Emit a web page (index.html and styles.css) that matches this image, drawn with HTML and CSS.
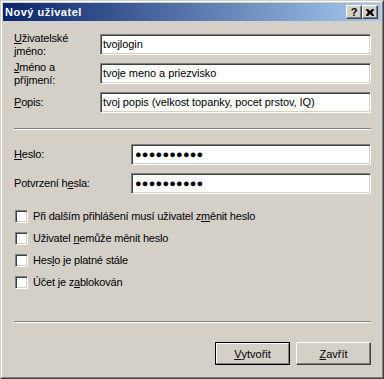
FILE: index.html
```html
<!DOCTYPE html>
<html lang="cs">
<head>
<meta charset="utf-8">
<title>Nový uživatel</title>
<link rel="stylesheet" href="styles.css">
</head>
<body>
<div class="window">
  <div class="frame">
    <div class="titlebar">
      <span class="title">Nový uživatel</span>
      <div class="tb-buttons">
        <span class="tb-btn help">?</span>
        <span class="tb-btn close"><svg width="8" height="7" viewBox="0 0 8 7"><path d="M0 0h2l2 2 2-2h2v1l-2 2.5 2 2.5v1h-2l-2-2-2 2h-2v-1l2-2.5-2-2.5z" fill="#000"/></svg></span>
      </div>
    </div>
    <div class="content">
      <div class="row">
        <label class="lbl lbl-wide"><u>U</u>živatelské<br>jméno:</label>
        <div class="field">tvojlogin</div>
      </div>
      <div class="row">
        <label class="lbl lbl-wide"><u>J</u>méno a<br>příjmení:</label>
        <div class="field">tvoje meno a priezvisko</div>
      </div>
      <div class="row">
        <label class="lbl lbl-wide"><u>P</u>opis:</label>
        <div class="field">tvoj popis (velkost topanky, pocet prstov, IQ)</div>
      </div>
      <div class="sep sep-first"></div>
      <div class="row pw-first">
        <label class="lbl lbl-pw"><u>H</u>eslo:</label>
        <div class="field pw">●●●●●●●●●●</div>
      </div>
      <div class="row">
        <label class="lbl lbl-pw">Potvrzení h<u>e</u>sla:</label>
        <div class="field pw">●●●●●●●●●●</div>
      </div>
      <div class="checks">
        <div class="check"><span class="box"></span><span class="ctext">Při dalším přihlášení musí uživatel z<u>m</u>ěnit heslo</span></div>
        <div class="check"><span class="box"></span><span class="ctext">Uživatel <u>n</u>emůže měnit heslo</span></div>
        <div class="check"><span class="box"></span><span class="ctext">Hes<u>l</u>o je platné stále</span></div>
        <div class="check"><span class="box"></span><span class="ctext">Účet je z<u>a</u>blokován</span></div>
      </div>
      <div class="sep sep-second"></div>
      <div class="buttons">
        <span class="btn default"><span class="btn-inner"><u>V</u>ytvořit</span></span>
        <span class="btn"><span class="btn-inner"><u>Z</u>avřít</span></span>
      </div>
    </div>
  </div>
</div>
</body>
</html>
```
FILE: styles.css
```css
html, body {
  margin: 0;
  padding: 0;
  background: #d4d0c8;
}
body {
  font-family: "Liberation Sans", Arial, sans-serif;
  font-size: 11px;
  color: #000;
}
.window {
  width: 384px;
  height: 379px;
  box-sizing: border-box;
  border: 1px solid;
  border-color: #d4d0c8 #404040 #404040 #d4d0c8;
  background: #d4d0c8;
}
.frame {
  height: 100%;
  box-sizing: border-box;
  border: 1px solid;
  border-color: #ffffff #808080 #808080 #ffffff;
  padding: 1px;
  display: flex;
  flex-direction: column;
}
.titlebar {
  height: 18px;
  display: flex;
  align-items: center;
  justify-content: space-between;
  background: linear-gradient(to right, #0a246a, #a6caf0);
  padding-left: 2px;
  padding-right: 3px;
  flex: none;
}
.title {
  color: #fff;
  font-weight: bold;
  font-size: 11px;
  letter-spacing: 0.5px;
  line-height: 18px;
}
.tb-buttons {
  display: flex;
}
.tb-btn {
  width: 16px;
  height: 14px;
  box-sizing: border-box;
  background: #d4d0c8;
  border: 1px solid;
  border-color: #ffffff #404040 #404040 #ffffff;
  box-shadow: inset -1px -1px #808080;
  display: flex;
  align-items: center;
  justify-content: center;
  font-weight: bold;
  font-size: 11px;
  line-height: 12px;
}
.content {
  flex: 1;
  padding: 9px 10px 0 11px;
  display: flex;
  flex-direction: column;
}
.row {
  height: 29px;
  display: flex;
  align-items: center;
}
.lbl {
  line-height: 13px;
  letter-spacing: -0.2px;
  flex: none;
}
.lbl-wide { width: 86px; }
.lbl-pw { width: 117px; }
.field {
  flex: 1;
  height: 21px;
  box-sizing: border-box;
  background: #fff;
  border: 1px solid;
  border-color: #808080 #ffffff #ffffff #808080;
  box-shadow: inset 1px 1px #404040, inset -1px -1px #d4d0c8;
  padding-left: 2px;
  line-height: 19px;
  letter-spacing: -0.07px;
  white-space: nowrap;
  overflow: hidden;
}
.pw {
  letter-spacing: 0.2px;
  padding-left: 3px;
}
.sep {
  border-top: 1px solid #808080;
  border-bottom: 1px solid #ffffff;
  height: 0;
  flex: none;
}
.sep-first { margin-top: 11px; }
.pw-first { margin-top: 10px; }
.checks {
  margin-top: 8px;
  display: flex;
  flex-direction: column;
}
.check {
  height: 22px;
  display: flex;
  align-items: flex-start;
}
.box {
  width: 13px;
  height: 13px;
  box-sizing: border-box;
  margin-top: 4px;
  margin-left: 1px;
  background: #fff;
  border: 1px solid;
  border-color: #808080 #ffffff #ffffff #808080;
  box-shadow: inset 1px 1px #404040, inset -1px -1px #d4d0c8;
  flex: none;
}
.ctext {
  margin-left: 5px;
  line-height: 21px;
  letter-spacing: -0.2px;
}
.sep-second { margin-top: 27px; }
.buttons {
  margin-top: 19px;
  display: flex;
  justify-content: flex-end;
  gap: 6px;
}
.btn {
  width: 75px;
  height: 23px;
  box-sizing: border-box;
  background: #d4d0c8;
  border: 1px solid;
  border-color: #ffffff #404040 #404040 #ffffff;
  box-shadow: inset -1px -1px #808080;
  display: flex;
}
.btn.default {
  border: 1px solid #000;
  box-shadow: none;
}
.btn-inner {
  flex: 1;
  display: flex;
  align-items: center;
  justify-content: center;
}
.btn.default .btn-inner {
  border: 1px solid;
  border-color: #ffffff #808080 #808080 #ffffff;
}
```
